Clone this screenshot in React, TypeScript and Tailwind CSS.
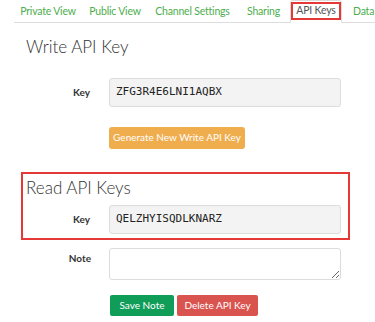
const tabs = [
  { label: "Private View", w: "w-[68px]" },
  { label: "Public View", w: "w-[66px]" },
  { label: "Channel Settings", w: "w-[89px]" },
  { label: "Sharing", w: "w-[53px]" },
];

function KeyRow({ label, value }: { label: string; value: string }) {
  return (
    <div className="flex items-start">
      <div className="w-[91px] pr-[1px] pt-[7px] text-right text-[10px] font-bold text-[#333]">
        {label}
      </div>
      <div className="ml-[18px] flex h-[29px] w-[232px] items-center rounded-[3px] border border-[#dcdcdc] bg-[#f3f3f3] pl-[6px] font-['DejaVu_Sans_Mono',monospace] text-[11px] text-[#222]">
        {value}
      </div>
    </div>
  );
}

export default function App() {
  return (
    <div className="h-[322px] w-[375px] overflow-hidden bg-white font-['Lato',sans-serif]">
      {/* Tabs */}
      <div className="ml-[14px] flex h-[23px] items-end border-b border-[#ddd]">
        {tabs.map((t) => (
          <div
            key={t.label}
            className={`${t.w} h-[22px] shrink-0 whitespace-nowrap pt-[4px] text-center text-[10.5px] tracking-[-0.2px] text-[#4cae4c]`}
          >
            {t.label}
          </div>
        ))}
        <div className="-mb-px flex h-[23px] w-[52px] shrink-0 items-start justify-center rounded-t-[3px] border border-b-white border-[#ddd] bg-white pt-[1px]">
          <div className="flex h-[18px] items-center whitespace-nowrap border-2 border-[#e53935] px-[3px] text-[10.5px] tracking-[-0.2px] text-[#555]">
            API Keys
          </div>
        </div>
        <div className="h-[22px] shrink-0 whitespace-nowrap pl-[11px] pt-[4px] text-[10.5px] tracking-[-0.2px] text-[#4cae4c]">
          Data Import / Export
        </div>
      </div>

      <div className="pl-[26px] pt-[11px] text-[17px] font-light text-[#333]">Write API Key</div>

      <div className="mt-[18px]">
        <KeyRow label="Key" value="ZFG3R4E6LNI1AQBX" />
      </div>

      <div className="ml-[109px] mt-[20px] flex h-[22px] w-[136px] items-center justify-center rounded-[3px] bg-[#f0ad4e] text-[10px] text-white">
        Generate New Write API Key
      </div>

      <div className="ml-[21px] mt-[23px] h-[68px] w-[329px] border-2 border-[#e53935] pt-[3px]">
        <div className="pl-[3px] text-[17px] font-light leading-[22px] text-[#333]">Read API Keys</div>
        <div className="-ml-[23px] mt-[6px]">
          <KeyRow label="Key" value="QELZHYISQDLKNARZ" />
        </div>
      </div>

      <div className="mt-[8px] flex items-start">
        <div className="w-[91px] pt-[3px] text-right text-[10px] font-bold text-[#333]">Note</div>
        <textarea className="ml-[18px] block h-[32px] w-[232px] resize-y rounded-[3px] border border-[#dcdcdc] bg-white" />
      </div>

      <div className="ml-[110px] mt-[15px] flex gap-[3px]">
        <div className="flex h-[21px] w-[64px] items-center justify-center rounded-[2px] bg-[#0f9d58] text-[10px] text-white">
          Save Note
        </div>
        <div className="flex h-[21px] w-[81px] items-center justify-center rounded-[2px] bg-[#d9534f] text-[10px] text-white">
          Delete API Key
        </div>
      </div>
    </div>
  );
}
